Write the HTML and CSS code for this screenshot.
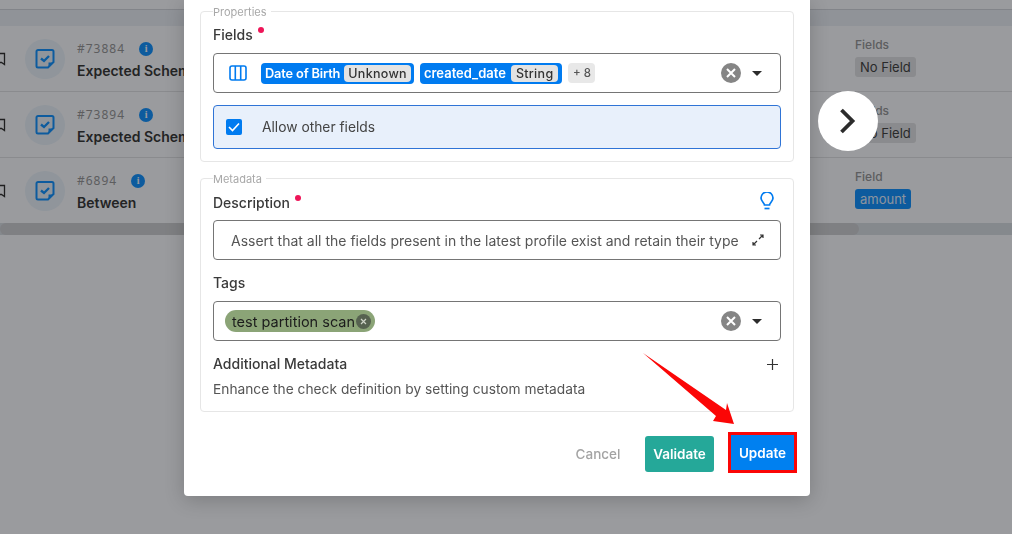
FILE: index.html
```html
<!DOCTYPE html>
<html lang="en">

<head>
    <meta charset="UTF-8">
    <meta name="viewport" content="width=device-width, initial-scale=1.0">
    <title>Edit Check</title>
    <link rel="stylesheet" href="styles.css">
</head>

<body>

    <!-- Page behind the dialog -->
    <div class="page">
        <div class="table-head"></div>
        <div class="row">
            <svg class="mark" width="6" height="14" viewBox="0 0 6 14"><path d="M-4 1.500h8.500v11l-3-2h-5.500" fill="none" stroke="#333" stroke-width="1.300"/></svg>
            <div class="check-icon">
                <svg width="20" height="20" viewBox="0 0 20 20"><path d="M3 1h14a1.500 1.500 0 0 1 1.500 1.500V13L13 18.500H3A1.500 1.500 0 0 1 1.500 17V2.500A1.500 1.500 0 0 1 3 1z" fill="none" stroke="#1496ff" stroke-width="2"/><path d="M13.500 18.500l5-5h-5z" fill="#1496ff"/><path d="M6 9.500l3 2.500 5-5" fill="none" stroke="#1496ff" stroke-width="2.300"/></svg>
            </div>
            <div class="check-main">
                <div class="check-id"><span>#73884</span><b class="info">i</b></div>
                <div class="check-name">Expected Schema</div>
            </div>
            <div class="check-field">
                <div class="field-label">Fields</div>
                <span class="chip">No Field</span>
            </div>
        </div>
        <div class="row">
            <svg class="mark" width="6" height="14" viewBox="0 0 6 14"><path d="M-4 1.500h8.500v11l-3-2h-5.500" fill="none" stroke="#333" stroke-width="1.300"/></svg>
            <div class="check-icon">
                <svg width="20" height="20" viewBox="0 0 20 20"><path d="M3 1h14a1.500 1.500 0 0 1 1.500 1.500V13L13 18.500H3A1.500 1.500 0 0 1 1.500 17V2.500A1.500 1.500 0 0 1 3 1z" fill="none" stroke="#1496ff" stroke-width="2"/><path d="M13.500 18.500l5-5h-5z" fill="#1496ff"/><path d="M6 9.500l3 2.500 5-5" fill="none" stroke="#1496ff" stroke-width="2.300"/></svg>
            </div>
            <div class="check-main">
                <div class="check-id"><span>#73894</span><b class="info">i</b></div>
                <div class="check-name">Expected Schema</div>
            </div>
            <div class="check-field">
                <div class="field-label">Fields</div>
                <span class="chip">No Field</span>
            </div>
        </div>
        <div class="row">
            <svg class="mark" width="6" height="14" viewBox="0 0 6 14"><path d="M-4 1.500h8.500v11l-3-2h-5.500" fill="none" stroke="#333" stroke-width="1.300"/></svg>
            <div class="check-icon">
                <svg width="20" height="20" viewBox="0 0 20 20"><path d="M3 1h14a1.500 1.500 0 0 1 1.500 1.500V13L13 18.500H3A1.500 1.500 0 0 1 1.500 17V2.500A1.500 1.500 0 0 1 3 1z" fill="none" stroke="#1496ff" stroke-width="2"/><path d="M13.500 18.500l5-5h-5z" fill="#1496ff"/><path d="M6 9.500l3 2.500 5-5" fill="none" stroke="#1496ff" stroke-width="2.300"/></svg>
            </div>
            <div class="check-main">
                <div class="check-id"><span>#6894</span><b class="info">i</b></div>
                <div class="check-name">Between</div>
            </div>
            <div class="check-field">
                <div class="field-label">Field</div>
                <span class="chip chip-blue">amount</span>
            </div>
        </div>
        <div class="scroll-track"><div class="scroll-thumb"></div></div>
    </div>

    <div class="backdrop"></div>

    <!-- Dialog -->
    <div class="overlay">
        <div class="modal">
            <fieldset class="group">
                <legend>Properties</legend>
                <div class="label">Fields<i class="required"></i></div>
                <div class="box">
                    <svg class="columns-icon" width="18" height="16" viewBox="0 0 18 16"><rect x="1" y="1" width="16" height="14" rx="2" fill="none" stroke="#007bf0" stroke-width="1.600"/><path d="M6.300 1v14M11.700 1v14" stroke="#007bf0" stroke-width="1.600"/></svg>
                    <span class="field-tag tag-dob">Date of Birth<em>Unknown</em></span>
                    <span class="field-tag tag-created">created_date<em>String</em></span>
                    <span class="more">+ 8</span>
                    <span class="spacer"></span>
                    <span class="clear"><svg width="10" height="10" viewBox="0 0 10 10"><path d="M1 1l8 8M9 1l-8 8" stroke="#fff" stroke-width="2"/></svg></span>
                    <span class="caret"></span>
                </div>
                <label class="allow">
                    <span class="tick"><svg width="12" height="10" viewBox="0 0 12 10"><path d="M1 5l3.500 3.500L11 1.500" fill="none" stroke="#fff" stroke-width="1.600"/></svg></span>
                    Allow other fields
                </label>
            </fieldset>

            <fieldset class="group group-meta">
                <legend>Metadata</legend>
                <div class="label-row label-desc">
                    <div class="label">Description<i class="required"></i></div>
                    <svg class="bulb" width="16" height="18" viewBox="0 0 16 18"><path d="M5.500 13c0-2-3.500-3.500-3.500-7a6 6 0 0 1 12 0c0 3.500-3.500 5-3.500 7z" fill="none" stroke="#007bf0" stroke-width="1.700"/><path d="M5.500 16.500h5" stroke="#007bf0" stroke-width="1.700"/></svg>
                </div>
                <div class="box box-text">
                    <span class="desc">Assert that all the fields present in the latest profile exist and retain their type</span>
                    <svg width="12" height="12" viewBox="0 0 12 12"><path d="M7 5l4-4M8 1h3v3M5 7l-4 4M1 8v3h3" fill="none" stroke="#333" stroke-width="1.200"/></svg>
                </div>
                <div class="label label-tags">Tags</div>
                <div class="box box-tags">
                    <span class="tag">test partition scan<span class="tag-x"><svg width="7" height="7" viewBox="0 0 7 7"><path d="M1 1l5 5M6 1L1 6" stroke="#cfd4c8" stroke-width="1.200"/></svg></span></span>
                    <span class="spacer"></span>
                    <span class="clear"><svg width="10" height="10" viewBox="0 0 10 10"><path d="M1 1l8 8M9 1l-8 8" stroke="#fff" stroke-width="2"/></svg></span>
                    <span class="caret"></span>
                </div>
                <div class="label-row label-extra">
                    <div class="label">Additional Metadata</div>
                    <svg class="plus" width="11" height="11" viewBox="0 0 11 11"><path d="M5.500 0v11M0 5.500h11" stroke="#333" stroke-width="1.200"/></svg>
                </div>
                <div class="hint">Enhance the check definition by setting custom metadata</div>
            </fieldset>

            <div class="actions">
                <button class="btn btn-cancel">Cancel</button>
                <button class="btn btn-validate">Validate</button>
                <button class="btn btn-update">Update</button>
            </div>
        </div>

        <button class="next">
            <svg width="18" height="26" viewBox="0 0 18 26"><path d="M2.500 2l11 11-11 11" fill="none" stroke="#2c2c2c" stroke-width="3.800"/></svg>
        </button>

        <!-- Annotation arrow -->
        <svg class="arrow" width="100" height="80" viewBox="0 0 100 80"><polygon points="0,0 83,57 84,50 91,71 70,68 73,63" fill="#fb0606"/></svg>
    </div>

</body>

</html>
```

FILE: styles.css
```css
* {
    box-sizing: border-box;
}

html,
body {
    height: 100%;
}

body {
    font-family: Inter, "Liberation Sans", sans-serif;
    margin: 0;
    overflow: hidden;
    background-color: #fff;
    color: #2c2c2c;
}

/* page behind the dialog */
.page {
    height: 534px;
    padding-top: 9px;
    background: #fff;
}

.table-head {
    height: 17px;
    border-top: 1px solid #d8dadd;
    background: #eef2f6;
}

.row {
    height: 66px;
    display: flex;
    align-items: center;
    border-bottom: 1px solid #e5e5e5;
    background: #fff;
}

.row:nth-child(4) {
    height: 65px;
    border-bottom: none;
}

.mark {
    width: 6px;
    flex-shrink: 0;
}

.check-icon {
    width: 40px;
    height: 40px;
    margin-left: 19px;
    border-radius: 50%;
    background: #eef6fb;
    display: flex;
    align-items: center;
    justify-content: center;
}

.check-main {
    margin-left: 12px;
    width: 778px;
}

.check-id {
    display: flex;
    align-items: center;
    gap: 14px;
    font-size: 12px;
    letter-spacing: 1px;
    color: #999;
    font-family: "Noto Sans", sans-serif;
    margin-top: 2px;
}

.info {
    width: 14px;
    height: 14px;
    border-radius: 50%;
    background: #1496ff;
    color: #fff;
    font-size: 10px;
    line-height: 14px;
    text-align: center;
    letter-spacing: 0;
    font-family: "Liberation Serif", serif;
}

.check-name {
    margin-top: 5px;
    font-size: 14px;
    font-weight: 600;
    color: #3a3a3a;
}

.check-field {
    display: flex;
    flex-direction: column;
    align-items: flex-start;
    gap: 5px;
    margin-bottom: 3px;
}

.field-label {
    font-size: 12px;
    color: #999;
    font-weight: 500;
}

.chip {
    padding: 0 5px;
    height: 20px;
    line-height: 20px;
    border-radius: 3px;
    background: #e5e5e5;
    color: #444;
    font-size: 13px;
}

.chip-blue {
    background: #1496ff;
    color: #e6f2ff;
}

.scroll-track {
    height: 12px;
    background: #dde1e4;
}

.scroll-thumb {
    width: 859px;
    height: 12px;
    border-radius: 6px;
    background: #d2d2d4;
}

/* dialog */
.backdrop {
    position: fixed;
    inset: 0;
    background: rgb(154, 155, 158);
    mix-blend-mode: multiply;
}

.overlay {
    position: fixed;
    inset: 0;
}

.modal {
    width: 626px;
    height: 496px;
    margin-left: 184px;
    padding: 4px 16px 0;
    background: #fff;
    border-radius: 0 0 4px 4px;
    box-shadow: 0 4px 20px rgba(0, 0, 0, 0.2);
}

.group {
    height: 158px;
    margin: 0 0 9px;
    padding: 0 12px;
    border: 1px solid #e6e6e6;
    border-radius: 4px;
}

.group-meta {
    height: 241px;
    margin-bottom: 0;
}

legend {
    padding: 2px 4px 0 0;
    margin-left: 0;
    font-size: 11px;
    line-height: 13px;
    color: #a8a8a8;
}

.label {
    font-size: 14px;
    font-weight: 500;
    line-height: 18px;
    color: #3a3a3a;
    margin-top: 7px;
    position: relative;
    width: fit-content;
}

.required {
    position: absolute;
    top: 1px;
    right: -11px;
    width: 6px;
    height: 6px;
    border-radius: 50%;
    background: #ee1558;
}

.box {
    height: 40px;
    margin-top: 9px;
    padding: 0 18px 0 15px;
    border: 1px solid #757575;
    border-radius: 4px;
    display: flex;
    align-items: center;
    gap: 6px;
}

.columns-icon {
    margin-right: 8px;
}

.field-tag {
    display: flex;
    align-items: center;
    gap: 4px;
    height: 21px;
    padding: 0 3px 0 4px;
    border-radius: 4px;
    background: #007bf0;
    color: #fff;
    font-size: 12.800px;
    font-weight: 600;
    white-space: nowrap;
}

.tag-dob {
    letter-spacing: -0.15px;
}

.tag-created {
    gap: 5px;
    padding-right: 4px;
    font-size: 13px;
}

.field-tag em {
    font-style: normal;
    font-weight: 500;
    height: 17px;
    line-height: 17px;
    padding: 0 4px;
    border-radius: 4px;
    background: #e3e3e3;
    color: #333;
    font-size: 12.500px;
    letter-spacing: 0.3px;
}

.tag-created em {
    padding: 0 5px;
}

.more {
    height: 20px;
    line-height: 20px;
    padding: 0 4.500px;
    border-radius: 4px;
    background: #e8e8e8;
    color: #555;
    font-size: 11.500px;
    font-weight: 500;
}

.spacer {
    flex: 1;
}

.clear {
    width: 20px;
    height: 20px;
    border-radius: 50%;
    background: #858585;
    display: flex;
    align-items: center;
    justify-content: center;
    margin-right: 5px;
}

.caret {
    width: 0;
    height: 0;
    border-left: 5px solid transparent;
    border-right: 5px solid transparent;
    border-top: 5px solid #2c2c2c;
}

.allow {
    height: 44px;
    margin-top: 12px;
    padding-left: 12px;
    display: flex;
    align-items: center;
    gap: 20px;
    background: #e8f0fb;
    border: 1px solid #2f74d6;
    border-radius: 4px;
    font-size: 13.800px;
    color: #444;
}

.tick {
    width: 16px;
    height: 16px;
    border-radius: 2px;
    background: #007bf0;
    display: flex;
    align-items: center;
    justify-content: center;
}

.label-row {
    display: flex;
    justify-content: space-between;
    align-items: center;
    padding-right: 5px;
}

.label-row .label {
    margin-top: 0;
}

.label-desc {
    margin-top: 8px;
}

.bulb {
    margin-top: -4px;
    margin-right: 1px;
}

.box-text {
    margin-top: 8px;
    padding: 0 16px 0 17px;
    justify-content: space-between;
}

.desc {
    font-size: 14px;
    color: #555;
    white-space: nowrap;
}

.label-tags {
    margin-top: 14px;
}

.box-tags {
    padding-left: 11px;
}

.tag {
    display: flex;
    align-items: center;
    gap: 1px;
    height: 22px;
    padding: 0 4px 0 7px;
    border-radius: 11px;
    background: #8ba477;
    color: #1c1c1c;
    font-size: 14.500px;
    white-space: nowrap;
}

.tag-x {
    width: 15px;
    height: 15px;
    border-radius: 50%;
    background: #566250;
    display: flex;
    align-items: center;
    justify-content: center;
}

.label-extra {
    margin-top: 14px;
    padding-right: 3px;
}

.hint {
    margin-top: 8px;
    font-size: 13.750px;
    color: #555;
}

.actions {
    margin-top: 20px;
    display: flex;
    justify-content: flex-end;
    align-items: flex-end;
    gap: 24px;
}

.btn {
    height: 36px;
    width: 69px;
    margin-bottom: 1px;
    border: none;
    border-radius: 3px;
    font-family: inherit;
    font-size: 13.500px;
    font-weight: 600;
    color: #fff;
    padding: 0;
}

.btn-cancel {
    width: 46px;
    background: none;
    color: #a3a3a3;
    font-weight: 500;
}

.btn-validate {
    background: #25a899;
}

.btn-update {
    width: 69px;
    height: 41px;
    margin: 0 -3px 0 -10px;
    padding-top: 1px;
    border: 3px solid #fb0606;
    border-radius: 0;
    background: #0080f0;
}

.next {
    position: absolute;
    left: 818px;
    top: 91px;
    width: 60px;
    height: 60px;
    border: none;
    border-radius: 50%;
    background: #fff;
    display: flex;
    align-items: center;
    justify-content: center;
    padding: 0;
}

.arrow {
    position: absolute;
    left: 643px;
    top: 353px;
}
```
